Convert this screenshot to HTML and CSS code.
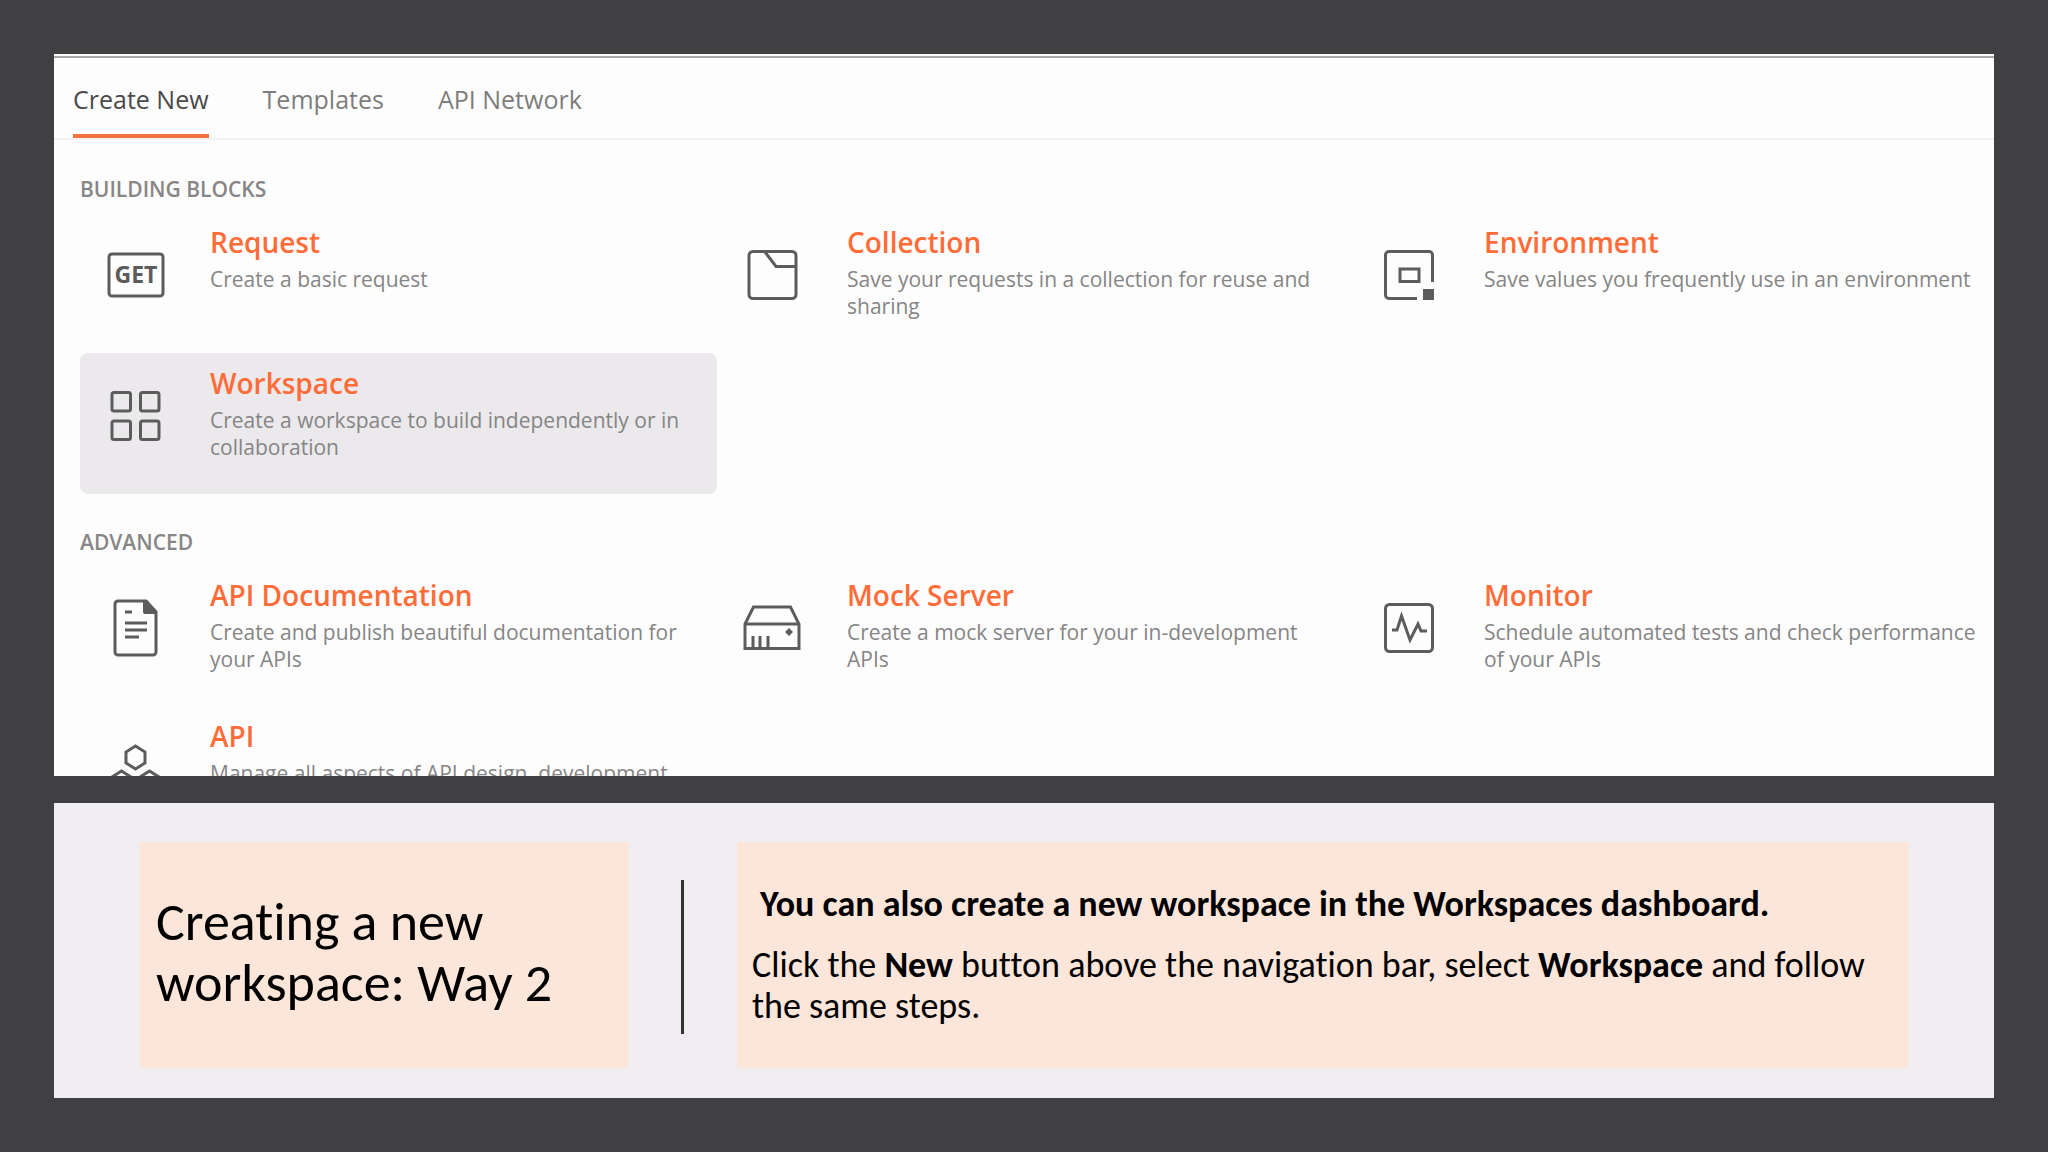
FILE: index.html
```html
<!DOCTYPE html>
<html lang="en">
<head>
    <meta charset="UTF-8">
    <meta name="viewport" content="width=device-width, initial-scale=1.0">
    <title>Creating a new workspace</title>
    <link rel="stylesheet" href="styles.css">
</head>
<body>
    <main class="create-panel">
        <nav class="tabs">
            <button type="button" class="tab active">Create New</button>
            <button type="button" class="tab">Templates</button>
            <button type="button" class="tab">API Network</button>
        </nav>

        <div class="sections">
            <h2 class="section-title">BUILDING BLOCKS</h2>
            <div class="cards">
                <a href="#" class="card">
                    <svg class="icon" viewBox="0 0 64 64">
                        <rect x="6" y="11" width="54" height="42" rx="3"/>
                        <text class="icon-text" x="33" y="40" text-anchor="middle">GET</text>
                    </svg>
                    <div class="card-text">
                        <h3>Request</h3>
                        <p>Create a basic request</p>
                    </div>
                </a>
                <a href="#" class="card">
                    <svg class="icon" viewBox="0 0 64 64">
                        <rect x="9" y="8.500" width="47" height="47" rx="4"/>
                        <path d="M25 9l11 14.500H56"/>
                    </svg>
                    <div class="card-text">
                        <h3>Collection</h3>
                        <p>Save your requests in a collection for reuse and sharing</p>
                    </div>
                </a>
                <a href="#" class="card">
                    <svg class="icon" viewBox="0 0 64 64">
                        <path d="M40 55.500H12a3.500 3.500 0 0 1-3.500-3.500V12a3.500 3.500 0 0 1 3.500-3.500H52a3.500 3.500 0 0 1 3.500 3.500V39"/>
                        <rect x="23" y="26" width="19" height="12.500"/>
                        <rect class="solid" x="46" y="46" width="11" height="11"/>
                    </svg>
                    <div class="card-text">
                        <h3>Environment</h3>
                        <p>Save values you frequently use in an environment</p>
                    </div>
                </a>
                <a href="#" class="card selected">
                    <svg class="icon" viewBox="0 0 64 64">
                        <rect x="9" y="8.500" width="18.500" height="18.500" rx="2"/>
                        <rect x="37.500" y="8.500" width="18.500" height="18.500" rx="2"/>
                        <rect x="9" y="37" width="18.500" height="18.500" rx="2"/>
                        <rect x="37.500" y="37" width="18.500" height="18.500" rx="2"/>
                    </svg>
                    <div class="card-text">
                        <h3>Workspace</h3>
                        <p>Create a workspace to build independently or in collaboration</p>
                    </div>
                </a>
            </div>

            <h2 class="section-title">ADVANCED</h2>
            <div class="cards">
                <a href="#" class="card">
                    <svg class="icon" viewBox="0 0 64 64">
                        <path d="M15 5H43L53 16V56a3 3 0 0 1-3 3H15a3 3 0 0 1-3-3V8a3 3 0 0 1 3-3z"/>
                        <path class="solid" d="M40 4h4l10 11v3H42a2 2 0 0 1-2-2z"/>
                        <path d="M22 16h7M22 27h22M22 34h22M22 41h14"/>
                    </svg>
                    <div class="card-text">
                        <h3>API Documentation</h3>
                        <p>Create and publish beautiful documentation for your APIs</p>
                    </div>
                </a>
                <a href="#" class="card">
                    <svg class="icon" viewBox="0 0 64 64">
                        <path d="M5 28L13.500 11H50.500L59 28V52.500H5zM5 28H59"/>
                        <path d="M13 40v12M20 40v12M28 40v12"/>
                        <path class="solid" d="M49 32l4 4-4 4-4-4z"/>
                    </svg>
                    <div class="card-text">
                        <h3>Mock Server</h3>
                        <p>Create a mock server for your in-development APIs</p>
                    </div>
                </a>
                <a href="#" class="card">
                    <svg class="icon" viewBox="0 0 64 64">
                        <rect x="8.500" y="8.500" width="47" height="47" rx="4"/>
                        <path d="M15 34h5l4.500-14 8.500 24 8-16 3 7h6"/>
                    </svg>
                    <div class="card-text">
                        <h3>Monitor</h3>
                        <p>Schedule automated tests and check performance of your APIs</p>
                    </div>
                </a>
                <a href="#" class="card">
                    <svg class="icon" viewBox="0 0 64 64">
                        <path d="M32.500 9l9.500 6v11l-9.500 6-9.500-6V15z"/>
                        <path d="M18.500 34l9.500 6v11l-9.500 6-9.500-6V40z"/>
                        <path d="M46.500 34l9.500 6v11l-9.500 6-9.500-6V40z"/>
                    </svg>
                    <div class="card-text">
                        <h3>API</h3>
                        <p>Manage all aspects of API design, development,</p>
                    </div>
                </a>
            </div>
        </div>
    </main>

    <section class="caption">
        <div class="caption-title">
            <h1>Creating a new workspace: Way 2</h1>
        </div>
        <div class="divider"></div>
        <div class="caption-text">
            <p class="lead">You can also create a new workspace in the Workspaces dashboard.</p>
            <p>Click the <strong>New</strong> button above the navigation bar, select <strong>Workspace</strong> and follow the same steps.</p>
        </div>
    </section>
</body>
</html>
```

FILE: styles.css
```css
* {
    box-sizing: border-box;
    margin: 0;
    padding: 0;
}

body {
    display: flex;
    flex-direction: column;
    gap: 27px;
    height: 100vh;
    padding: 54px;
    background-color: #403f41;
    font-family: "Open Sans", sans-serif;
}

/* Top panel, the list is cut off at its bottom edge */
.create-panel {
    flex: 1;
    min-height: 0;
    overflow: hidden;
    padding-top: 2px;
    background-color: #fefdfe;
}

.tabs {
    display: flex;
    gap: 54px;
    padding-left: 19px;
    border-top: 2px solid #a9a8a9;
    border-bottom: 2px solid #f1f1f1;
}

.tab {
    padding: 23px 0 17px;
    border: none;
    border-bottom: 4px solid transparent;
    background: none;
    color: #7d7d7d;
    font-family: inherit;
    font-size: 25px;
    line-height: 36px;
}

.tab.active {
    border-bottom-color: #f3703f;
    color: #4a4a4a;
}

.sections {
    padding: 1px 3px 0 26px;
}

.section-title {
    padding: 34px 0 9px;
    color: #868686;
    font-size: 21px;
    font-weight: 600;
    line-height: 28px;
}

.cards {
    display: grid;
    grid-template-columns: repeat(3, 1fr);
    grid-auto-rows: 141px;
}

.card {
    display: flex;
    gap: 43px;
    padding: 12px 10px 0 23px;
    border-radius: 8px;
    text-decoration: none;
}

.card.selected {
    background-color: #ebe9ec;
}

.card h3 {
    color: #ff6c37;
    font-size: 28px;
    font-weight: 600;
    line-height: 36px;
}

.card p {
    margin-top: 6px;
    color: #858585;
    font-size: 21px;
    line-height: 27px;
}

.icon {
    flex: none;
    width: 64px;
    height: 64px;
    margin-top: 19px;
    fill: none;
    stroke: #5c5c5c;
    stroke-width: 3;
}

.icon .solid {
    fill: #5c5c5c;
    stroke: none;
}

.icon-text {
    fill: #5c5c5c;
    stroke: none;
    font-size: 23px;
    font-weight: 700;
}

/* Bottom panel */
.caption {
    display: grid;
    grid-template-columns: 5fr 3px 12fr;
    column-gap: 53px;
    padding: 39px 86px 30px;
    background-color: #f0eef1;
    color: #000;
    font-family: Calibri, Carlito, Lato, sans-serif;
    font-variant-ligatures: none;
}

.caption-title,
.caption-text {
    display: flex;
    flex-direction: column;
    justify-content: center;
    background-color: #fce5d9;
}

.caption-title {
    padding: 50px 16px 54px;
}

.caption-title h1 {
    font-size: 54px;
    font-weight: 400;
    line-height: 61px;
}

.divider {
    margin: 38px 0 34px;
    background-color: #333;
}

.caption-text {
    gap: 20px;
    padding: 0 15px;
    font-size: 36px;
    line-height: 41px;
}

.caption-text .lead {
    padding-left: 8px;
    font-weight: 700;
}
```
